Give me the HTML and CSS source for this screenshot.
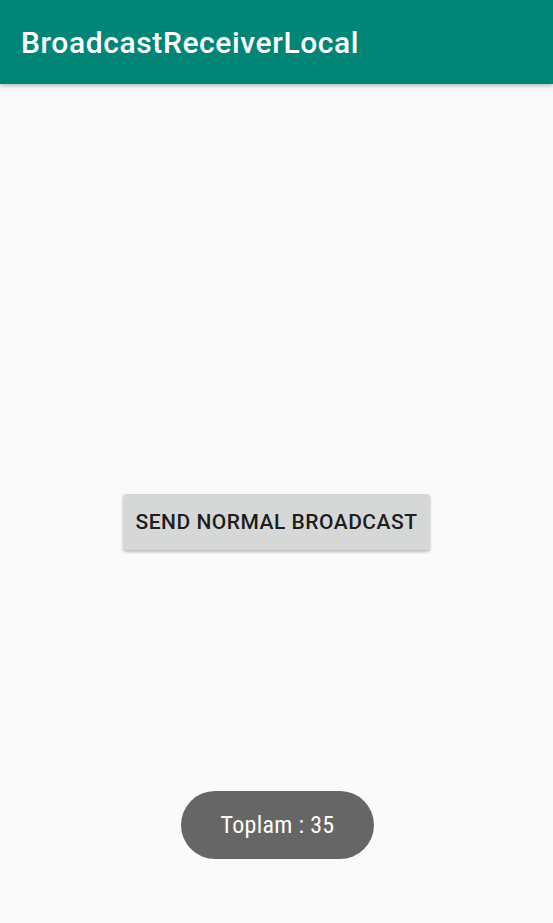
FILE: index.html
```html
<!DOCTYPE html>
<html>
<head>
<meta charset="utf-8">
<link rel="stylesheet" href="styles.css">
</head>
<body>
<div class="app">
  <header class="appbar"><span class="title">BroadcastReceiverLocal</span></header>
  <main class="content">
    <button class="btn">SEND NORMAL BROADCAST</button>
  </main>
  <div class="toast">Toplam : 35</div>
</div>
</body>
</html>
```
FILE: styles.css
```css
html, body { margin: 0; padding: 0; }
body { background: #fafafa; font-family: Roboto, "Noto Sans", sans-serif; }
.app { position: relative; width: 553px; height: 923px; display: flex; flex-direction: column; overflow: hidden; }
.appbar {
  height: 84px; background: #008577; display: flex; align-items: center;
  padding-left: 21px; box-shadow: 0 2px 4px rgba(0,0,0,0.25); position: relative; z-index: 1;
  flex-shrink: 0;
}
.title { color: #fff; font-size: 30px; font-weight: 500; letter-spacing: 0.6px; }
.content { flex: 1; display: flex; justify-content: center; align-items: flex-start; padding-top: 410px; }
.btn {
  width: 307px; height: 56px; background: #d6d7d7; border: none; border-radius: 3px;
  font-family: Roboto, sans-serif; font-weight: 500; font-size: 21px; color: #1e1e1e;
  letter-spacing: 0.5px; box-shadow: 0 2px 3px rgba(0,0,0,0.25); padding: 0;
}
.toast {
  position: absolute; left: 181px; top: 791px; width: 193px; height: 68px;
  border-radius: 34px; background: #666666; color: #fff; display: flex;
  align-items: center; justify-content: center; font-size: 24px; letter-spacing: 0.3px;
  font-stretch: condensed;
}
```
